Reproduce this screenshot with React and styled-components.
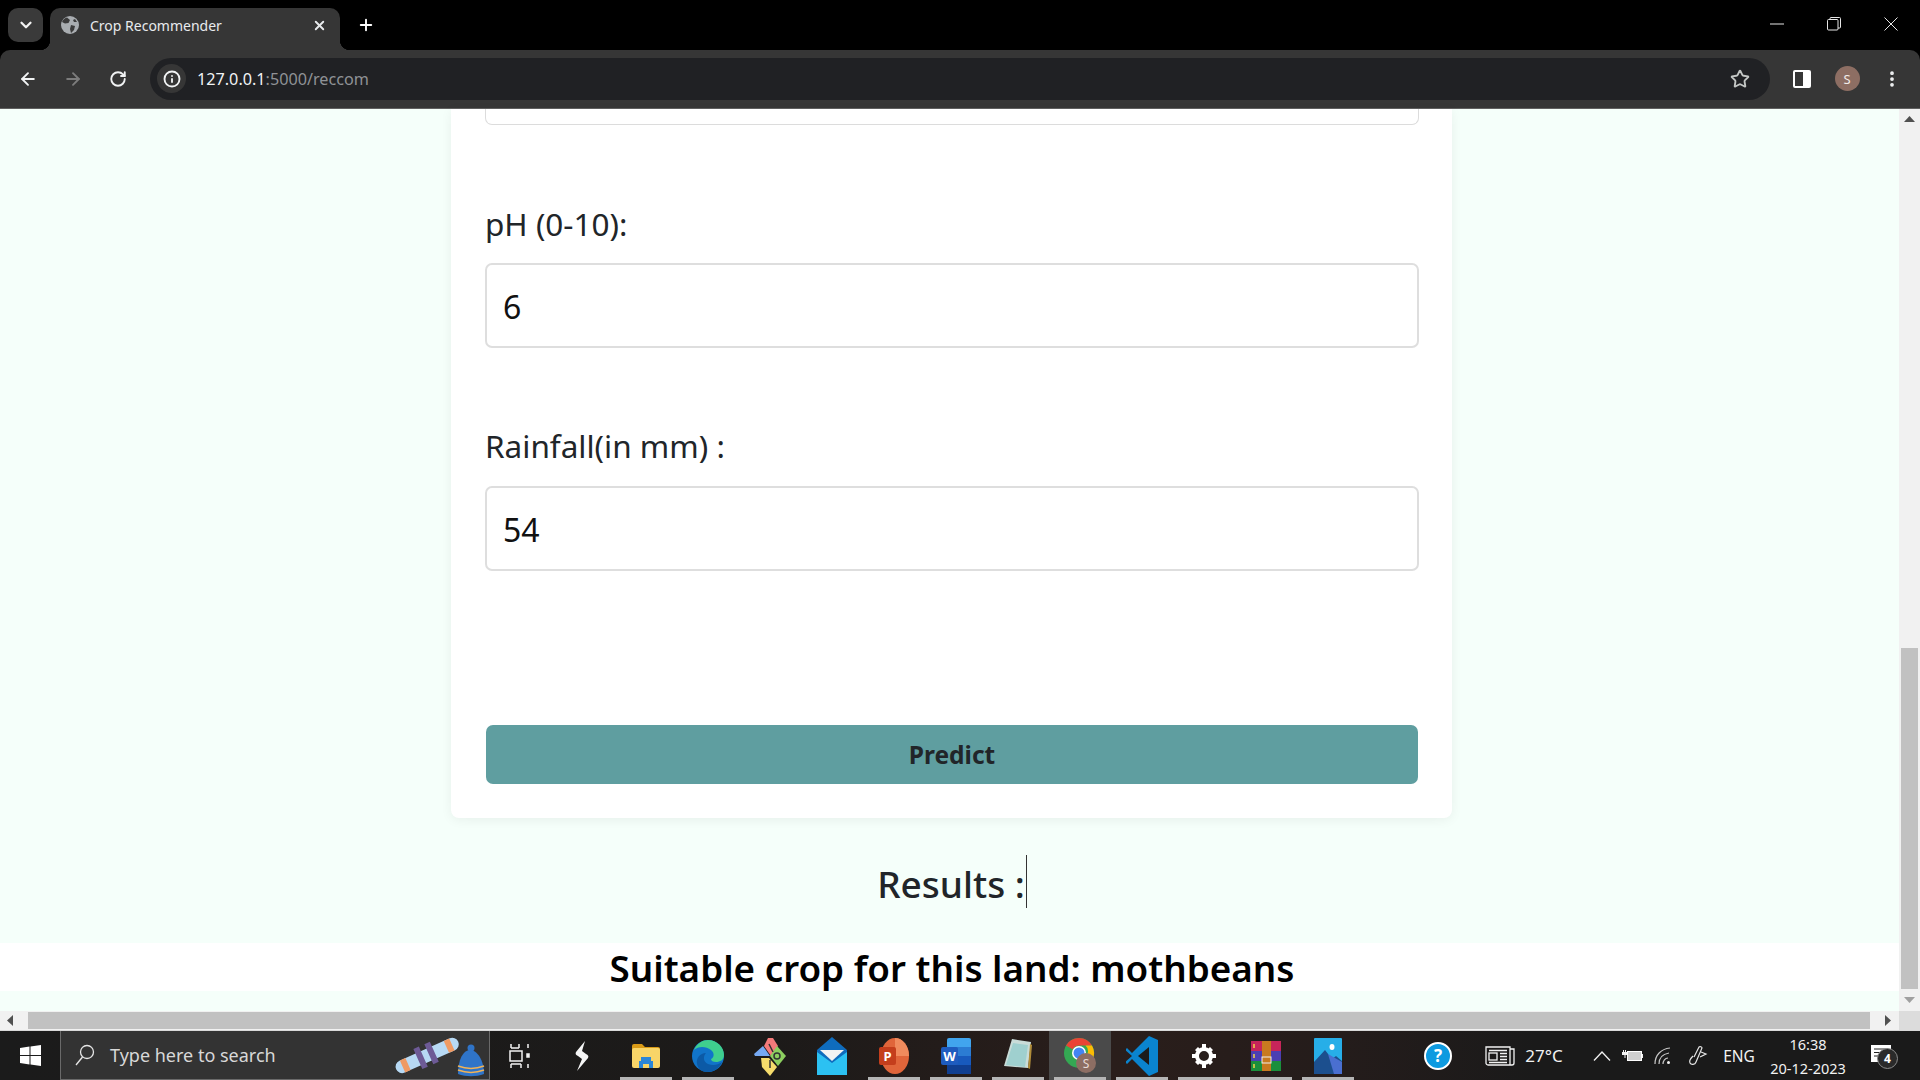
import React from "react";
import styled, { createGlobalStyle } from "styled-components";
import { ArrowLeft, ArrowRight, ChevronDown, Info, MoreVertical, Plus, RotateCw, Star, X } from "lucide-react";

const Global = createGlobalStyle`
  html, body { margin: 0; height: 100%; overflow: hidden; background: #000; }
  #root { height: 100%; }
  * { box-sizing: border-box; }
`;

const Screen = styled.div`
  display: flex;
  flex-direction: column;
  height: 1080px;
  width: 1920px;
  font-family: "Noto Sans", "Open Sans", sans-serif;
`;

/* browser chrome */
const TabStrip = styled.div`
  display: flex;
  align-items: flex-end;
  height: 50px;
  padding-left: 8px;
  background: #000;
  flex: none;
`;
const TabMenu = styled.div`
  width: 35px;
  height: 34px;
  margin-bottom: 8px;
  border-radius: 10px;
  background: #3a3a3a;
  color: #f2f2f2;
  display: flex;
  align-items: center;
  justify-content: center;
`;
const Tab = styled.div`
  position: relative;
  width: 290px;
  height: 42px;
  margin-left: 7px;
  padding: 0 13px 8px 11px;
  background: #363636;
  border-radius: 10px 10px 0 0;
  display: flex;
  align-items: center;
  color: #e8eaed;
  font-size: 14px;
  &::before, &::after {
    content: "";
    position: absolute;
    bottom: 0;
    width: 10px;
    height: 10px;
  }
  &::before { left: -10px; background: radial-gradient(circle at 0 0, #000 10px, #363636 10.5px); }
  &::after { right: -10px; background: radial-gradient(circle at 100% 0, #000 10px, #363636 10.5px); }
`;
const TabTitle = styled.span`
  margin-left: 11px;
  flex: 1;
`;
const NewTab = styled.div`
  width: 30px;
  height: 42px;
  margin-left: 11px;
  padding-bottom: 8px;
  color: #fff;
  display: flex;
  align-items: center;
  justify-content: center;
`;
const WindowControls = styled.div`
  margin-left: auto;
  height: 50px;
  display: flex;
`;
const WindowButton = styled.div`
  width: ${(p) => p.$w || 57}px;
  padding-bottom: 2px;
  display: flex;
  align-items: center;
  justify-content: center;
  color: #e6e6e6;
`;
const Toolbar = styled.div`
  height: 59px;
  flex: none;
  display: flex;
  align-items: center;
  padding: 0 5.5px 1px 5px;
  background: #363636;
  border-radius: 10px 10px 0 0;
  border-bottom: 1px solid #606060;
`;
const NavButton = styled.div`
  width: 45px;
  height: 42px;
  flex: none;
  display: flex;
  align-items: center;
  justify-content: center;
  color: ${(p) => (p.$off ? "#7c7c7c" : "#f1f3f4")};
`;
const Omnibox = styled.div`
  flex: 1;
  height: 42px;
  margin: 0 10px;
  padding: 0 20px 0 7px;
  border-radius: 21px;
  background: #202124;
  display: flex;
  align-items: center;
`;
const SiteBadge = styled.div`
  width: 29px;
  height: 29px;
  border-radius: 50%;
  background: #363636;
  color: #f1f3f4;
  display: flex;
  align-items: center;
  justify-content: center;
`;
const Url = styled.div`
  margin-left: 11px;
  flex: 1;
  font-size: 16.2px;
  color: #8f9296;
  b { font-weight: 400; color: #f1f3f4; }
`;
const Avatar = styled.div`
  width: 25px;
  height: 25px;
  border-radius: 50%;
  background: #8d6e63;
  color: #f3ece9;
  font-size: 13px;
  display: flex;
  align-items: center;
  justify-content: center;
`;

/* page */
const Viewport = styled.div`
  height: 902px;
  flex: none;
  display: flex;
  background: #f5fffa;
`;
const Page = styled.main`
  flex: 1;
  min-width: 0;
  display: flex;
  flex-direction: column;
  align-items: center;
  color: #212529;
`;
const Card = styled.form`
  width: 1001px;
  margin-left: 4px;
  padding: 0 33px 34px 34px;
  background: #fff;
  border-radius: 0 0 8px 8px;
  box-shadow: 0 2px 12px rgba(0, 0, 0, 0.06);
`;
const InputStub = styled.div`
  height: 16px;
  border: 1px solid #dcdcdc;
  border-top: 0;
  border-radius: 0 0 7px 7px;
`;
const Label = styled.label`
  display: block;
  margin: ${(p) => p.$top}px 0 ${(p) => p.$bottom}px;
  font-size: 31.5px;
  line-height: 44px;
  color: #212529;
`;
const Input = styled.div`
  height: 85px;
  padding: 1px 16px 0;
  border: 2px solid #dedede;
  border-radius: 7px;
  font-size: 32px;
  color: #111;
  display: flex;
  align-items: center;
`;
const Submit = styled.button`
  display: block;
  width: 932px;
  height: 59px;
  margin: 154px 0 0 1px;
  border: 0;
  border-radius: 7px;
  background: #5f9ea0;
  color: #212529;
  font: 700 24.5px "Noto Sans", sans-serif;
`;
const ResultsTitle = styled.h2`
  margin: 39px 0 33px 5px;
  height: 53px;
  font-size: 37px;
  font-weight: 500;
  line-height: 53px;
  display: flex;
`;
const Caret = styled.span`
  width: 1px;
  height: 53px;
  margin: -2px 0 0 1px;
  background: #333;
`;
const ResultBand = styled.div`
  width: 100%;
  height: 48px;
  padding-left: 5px;
  background: #fff;
  color: #000;
  font-size: 36.8px;
  font-weight: 600;
  line-height: 50px;
  text-align: center;
`;

/* scrollbars */
const VScroll = styled.div`
  width: 21px;
  flex: none;
  background: #f1f1f1;
  padding: 0 2px 0 2px;
  display: flex;
  flex-direction: column;
  align-items: center;
`;
const ArrowBox = styled.div`
  height: ${(p) => p.$h || 20}px;
  width: ${(p) => p.$w || "100%"};
  padding-left: ${(p) => p.$pad || 0}px;
  flex: none;
  display: flex;
  align-items: center;
  justify-content: center;
`;
const VSpacer = styled.div`
  flex: 1;
`;
const VThumb = styled.div`
  width: 17px;
  height: 341px;
  background: #c1c1c1;
`;
const HScroll = styled.div`
  height: 19px;
  flex: none;
  display: flex;
  align-items: center;
  background: #f1f1f1;
`;
const HThumb = styled.div`
  width: 1842px;
  margin-left: 8px;
  height: 17px;
  flex: none;
  background: #c1c1c1;
`;
const ScrollCorner = styled.div`
  width: 21px;
  height: 19px;
  flex: none;
  margin-left: auto;
  background: #dcdcdc;
`;

/* taskbar */
const Taskbar = styled.div`
  height: 50px;
  flex: none;
  display: flex;
  background: linear-gradient(90deg, #1b1b1b 0%, #1c1a19 40%, #2a1e1b 58%, #241c1b 70%, #1a1a1a 80%);
  border-top: 1px solid #d8d8d8;
  color: #f2f2f2;
`;
const StartButton = styled.div`
  width: 60px;
  display: flex;
  align-items: center;
  justify-content: center;
`;
const SearchBox = styled.div`
  width: 430px;
  display: flex;
  align-items: center;
  padding: 0 2px 0 14px;
  background: #333;
  border: 1px solid #6a6a6a;
  border-top: 0;
  color: #d8d8d8;
  font-size: 18px;
`;
const SearchText = styled.span`
  margin-left: 15px;
  flex: 1;
`;
const AppSlot = styled.div`
  position: relative;
  width: ${(p) => p.$w || 62}px;
  flex: none;
  display: flex;
  align-items: center;
  justify-content: center;
  background: ${(p) => (p.$active ? "#4a4a4a" : "transparent")};
  ${(p) =>
    p.$running &&
    `&::after {
      content: "";
      position: absolute;
      left: 5px;
      right: 5px;
      bottom: 0;
      height: 3px;
      background: #b5b5b5;
    }`}
`;
const TraySlot = styled.div`
  width: ${(p) => p.$w}px;
  margin-left: ${(p) => p.$ml || 0}px;
  flex: none;
  display: flex;
  align-items: center;
  justify-content: center;
  font-size: ${(p) => p.$size || 16}px;
  white-space: nowrap;
`;
const Clock = styled.div`
  width: 86px;
  margin-left: 7px;
  flex: none;
  font-size: 14.5px;
  line-height: 24px;
  text-align: center;
  display: flex;
  flex-direction: column;
  justify-content: center;
`;
const Badge = styled.span`
  position: absolute;
  right: -7px;
  bottom: -6px;
  width: 21px;
  height: 21px;
  border-radius: 50%;
  border: 1px solid #8c8c8c;
  background: #2a2a2a;
  color: #fff;
  font-size: 12px;
  font-weight: 700;
  line-height: 19px;
  text-align: center;
`;
const NotifyIcon = styled.div`
  position: relative;
  width: 20px;
  height: 18px;
  margin-bottom: 4px;
`;

/* drawings */
const Globe = () => (
  <svg width="18" height="18" viewBox="0 0 18 18">
    <circle cx="9" cy="9" r="9" fill="#a9adb1" />
    <path d="M6 1.5 9 4 7.5 7 4 7.5 1 6C2 3.5 4 2 6 1.5ZM10 9l4 1-1 4-3 3-1-4ZM14 3l2 3-3 0-1-2Z" fill="#3b3b3b" />
  </svg>
);
const RestoreIcon = () => (
  <svg width="14" height="14" viewBox="0 0 14 14" fill="none" stroke="currentColor">
    <rect x="0.5" y="2.5" width="10.5" height="10.5" rx="1" />
    <path d="M3 2.5V1.5a1 1 0 0 1 1-1h8.5a1 1 0 0 1 1 1v8.5a1 1 0 0 1-1 1H11" />
  </svg>
);
const MinimizeIcon = () => (
  <svg width="14" height="14" viewBox="0 0 14 14" stroke="currentColor"><path d="M0 7h14" /></svg>
);
const CloseIcon = () => (
  <svg width="14" height="14" viewBox="0 0 14 14" stroke="currentColor"><path d="M.5.5l13 13M13.500.5l-13 13" /></svg>
);
const SidePanelIcon = () => (
  <svg width="18" height="18" viewBox="0 0 18 18">
    <rect x="0" y="0" width="18" height="18" rx="2" fill="#fff" />
    <rect x="2" y="2" width="8" height="14" fill="#363636" />
  </svg>
);
const UpTriangle = ({ fill = "#505050", flip }) => (
  <svg width="11" height="6" viewBox="0 0 11 6" style={flip ? { transform: "scaleY(-1)" } : undefined}>
    <path d="M5.500 0 11 6H0Z" fill={fill} />
  </svg>
);
const SideTriangle = ({ flip }) => (
  <svg width="6" height="11" viewBox="0 0 6 11" style={flip ? { transform: "scaleX(-1)" } : undefined}>
    <path d="M0 0 6 5.500 0 11Z" fill="#505050" />
  </svg>
);
const WindowsLogo = () => (
  <svg width="21" height="21" viewBox="0 0 21 21" fill="#fff">
    <path d="M0 3 9.500 1.600V10H0ZM10.500 1.400 21 0V10H10.500ZM0 11H9.500V19.400L0 18ZM10.500 11H21V21L10.500 19.600Z" />
  </svg>
);
const SearchGlass = () => (
  <svg width="20" height="22" viewBox="0 0 20 22" fill="none" stroke="#e6e6e6" strokeWidth="1.300">
    <circle cx="12" cy="8" r="6.500" />
    <path d="M7.500 13 1 21" />
  </svg>
);
const SearchDoodle = () => (
  <svg width="94" height="44" viewBox="0 0 94 44">
    <g transform="rotate(-24 34 22)">
      <rect x="0" y="16" width="68" height="13" rx="6.500" fill="#b7d9f4" />
      <path d="M7 16h6v13H7ZM55 16h6v13H55Z" fill="#ef9a63" />
      <path d="M24 11h6v22h-6ZM36 11h6v22h-6Z" fill="#6d5a96" />
    </g>
    <path d="M65 41c0-14 5-24 12-24s14 10 14 24c-8 3-18 3-26 0Z" fill="#2f74c8" />
    <circle cx="78" cy="15" r="3.500" fill="#2f74c8" />
    <path d="M65 33c8 3 18 3 26 0M65 37c8 3 18 3 26 0" stroke="#f2b356" strokeWidth="1.600" fill="none" />
  </svg>
);
const TaskView = () => (
  <svg width="22" height="26" viewBox="0 0 22 26" fill="none" stroke="#f2f2f2" strokeWidth="1.500">
    <path d="M2 5V1M10 1v4M2 5h8M2 21v4M12 21v4M2 21h10" />
    <rect x="1" y="8" width="12" height="10" />
    <path d="M19 1v4M19 21v4" />
    <rect x="18" y="11" width="2" height="3" fill="#f2f2f2" />
  </svg>
);
const SlashApp = () => (
  <svg width="16" height="30" viewBox="0 0 16 30">
    <path d="M11 0 2 11c-1 2 0 3 2 4l4 3-5 12 11-13c1-2 0-3-2-4L8 10Z" fill="#f5f5f5" />
  </svg>
);
const FolderIcon = () => (
  <svg width="28" height="24" viewBox="0 0 28 24">
    <path d="M0 2a2 2 0 0 1 2-2h8l3 3h13a2 2 0 0 1 2 2v3H0Z" fill="#d99a16" />
    <rect x="0" y="4" width="28" height="20" rx="2" fill="#f8d568" />
    <path d="M9 13h10v4h2v7h-4v-4h-6v4H7v-7h2Z" fill="#2a86d8" />
  </svg>
);
const EdgeIcon = () => (
  <svg width="32" height="32" viewBox="0 0 32 32">
    <circle cx="16" cy="16" r="16" fill="#1174c9" />
    <path d="M2 10C5 3 11 0 16 0c9 0 16 7 16 15 0 5-4 7-8 7-3 0-5-1-5-3 3-1 4-6 0-9C14 6 6 6 2 10Z" fill="#3fce8e" />
    <path d="M30 22c-3 7-9 10-15 10-5 0-9-3-10-8-1-6 3-11 9-11-3 3-3 9 2 11 5 2 10 1 14-2Z" fill="#0c5aa6" />
  </svg>
);
const DiamondApp = () => (
  <svg width="32" height="40" viewBox="0 0 32 40">
    <path d="M14 2h5l5 8-7 10-7-10Z" fill="#f47a7a" />
    <path d="M9 11l7 10H1l-1-2Z" fill="#76a9f2" transform="translate(0 -1)" />
    <path d="M23 10l9 10-8 10-8-10Z" fill="#8ccf5f" />
    <path d="M15 22l8 9-7 9-8-9-1-9Z" fill="#f6dc6c" />
    <circle cx="23" cy="20" r="3" fill="none" stroke="#333" strokeWidth="1.500" />
    <path d="M15 8l4 8M16 24v8" stroke="#333" strokeWidth="1.500" />
  </svg>
);
const MailIcon = () => (
  <svg width="30" height="38" viewBox="0 0 30 38">
    <path d="M0 13 15 0l15 13v25H0Z" fill="#0f6cbd" />
    <path d="M3 13h24L15 24Z" fill="#f3f3f3" />
    <path d="M0 15l15 11 15-11v23H0Z" fill="#2cc1f2" />
  </svg>
);
const PowerPointIcon = () => (
  <svg width="30" height="36" viewBox="0 0 30 36">
    <ellipse cx="16" cy="18" rx="14" ry="18" fill="#e0653a" />
    <path d="M16 0a14 18 0 0 1 14 18H16Z" fill="#f08b5d" />
    <rect x="0" y="9" width="17" height="18" rx="2" fill="#c43e1c" />
    <text x="8.500" y="23" textAnchor="middle" fontSize="13" fontWeight="700" fill="#fff" fontFamily="Noto Sans">P</text>
  </svg>
);
const WordIcon = () => (
  <svg width="30" height="36" viewBox="0 0 30 36">
    <rect x="6" y="0" width="24" height="36" rx="2" fill="#41a5ee" />
    <rect x="6" y="9" width="24" height="9" fill="#2b7cd3" />
    <rect x="6" y="18" width="24" height="9" fill="#185abd" />
    <rect x="6" y="27" width="24" height="9" fill="#103f91" />
    <rect x="0" y="9" width="17" height="18" rx="2" fill="#1e5cbf" />
    <text x="8.500" y="23" textAnchor="middle" fontSize="13" fontWeight="700" fill="#fff" fontFamily="Noto Sans">W</text>
  </svg>
);
const NotepadIcon = () => (
  <svg width="28" height="36" viewBox="0 0 28 36">
    <path d="M8 1 27 4 24 30 0 28Z" fill="#c9dcd8" />
    <path d="M9 5 24 7 21 29 2 27Z" fill="#9fd0cf" />
    <path d="M24 30l2-24 2 1-2 24Z" fill="#b08d3a" />
  </svg>
);
const ChromeIcon = () => (
  <svg width="32" height="36" viewBox="0 0 32 36">
    <circle cx="15" cy="15" r="15" fill="#34a853" />
    <path d="M15 0a15 15 0 0 1 13 7.500H15a7.500 7.500 0 0 0-6.500 3.800L2 7.500A15 15 0 0 1 15 0Z" fill="#ea4335" />
    <path d="M28 7.500A15 15 0 0 1 15 30l6.500-11.200a7.500 7.500 0 0 0 0-11.300Z" fill="#fbbc04" />
    <circle cx="15" cy="15" r="7" fill="#fff" />
    <circle cx="15" cy="15" r="5.500" fill="#4285f4" />
    <circle cx="22" cy="25" r="10" fill="#8d6e63" />
    <text x="22" y="29.500" textAnchor="middle" fontSize="12" fill="#e8dcd8" fontFamily="Noto Sans">S</text>
  </svg>
);
const VsCodeIcon = () => (
  <svg width="32" height="40" viewBox="0 0 32 40">
    <path d="M23 0 32 4V36L23 40 6 23 1 28-1 26 6 20-1 14 1 12 6 17Z" fill="#0a84cf" />
    <path d="M23 11 12 20l11 9Z" fill="#1b1b1b" />
  </svg>
);
const GearIcon = () => (
  <svg width="24" height="24" viewBox="0 0 24 24">
    <circle cx="12" cy="12" r="7" fill="none" stroke="#fff" strokeWidth="4" />
    <path d="M10 0h4v5h-4ZM10 19h4v5h-4ZM0 10h5v4H0ZM19 10h5v4h-5ZM3 6l3-3 3 3-3 3ZM15 18l3-3 3 3-3 3ZM18 3l3 3-3 3-3-3ZM6 15l3 3-3 3-3-3Z" fill="#fff" />
  </svg>
);
const RarIcon = () => (
  <svg width="30" height="30" viewBox="0 0 30 30">
    <rect width="30" height="10" fill="#c7255a" />
    <rect y="10" width="30" height="10" fill="#4b3fb2" />
    <rect y="20" width="30" height="10" fill="#1b8f3c" />
    <rect x="11" width="9" height="30" fill="#c87a20" />
    <rect x="11" y="16" width="9" height="6" fill="none" stroke="#eee" />
    <path d="M3 3v4M3 13v4M3 23v4" stroke="#f3d34a" strokeWidth="1.500" />
  </svg>
);
const PhotosIcon = () => (
  <svg width="28" height="36" viewBox="0 0 28 36">
    <rect width="28" height="36" rx="1" fill="#27aee8" />
    <path d="M0 24 11 12l7 9 4-3 6 5v13H0Z" fill="#1c4f8e" />
    <path d="M14 16l14 8v12H20Z" fill="#4a6fd0" />
    <ellipse cx="18" cy="9" rx="2.500" ry="3" fill="#fff" />
  </svg>
);
const HelpIcon = () => (
  <svg width="28" height="28" viewBox="0 0 28 28">
    <circle cx="14" cy="14" r="13" fill="#0d9ae0" stroke="#fff" strokeWidth="2" />
    <text x="14" y="20" textAnchor="middle" fontSize="17" fontWeight="700" fill="#fff" fontFamily="Noto Sans">?</text>
  </svg>
);
const NewsIcon = () => (
  <svg width="30" height="20" viewBox="0 0 30 20" fill="none" stroke="#f2f2f2" strokeWidth="1.300">
    <path d="M1 1h24v18H3a2 2 0 0 1-2-2ZM25 3h4v14a2 2 0 0 1-2 2h-2" />
    <rect x="4" y="7" width="8" height="7" />
    <path d="M4 4.500h18M15 7.500h7M15 10.500h7M15 13.500h7M4 16.500h18" />
  </svg>
);
const TrayChevron = () => (
  <svg width="18" height="10" viewBox="0 0 18 10" fill="none" stroke="#f2f2f2" strokeWidth="1.300"><path d="M1 9.500 9 1l8 8.500" /></svg>
);
const BatteryIcon = () => (
  <svg width="21" height="13" viewBox="0 0 21 13">
    <path d="M0 3h1V1h1v2h1V1h1v2h1v3H3.500v3h-1V6H0Z" fill="#f2f2f2" />
    <rect x="5.500" y="2.500" width="14" height="9" fill="#cfcfcf" stroke="#fff" />
    <rect x="20" y="5" width="1" height="4" fill="#f2f2f2" />
  </svg>
);
const WifiIcon = () => (
  <svg width="18" height="18" viewBox="0 0 18 18" fill="none" stroke="#c8c8c8" strokeWidth="1.200">
    <path d="M1 17C1 8 7 2 16 1M5 17C5 11 9 7 15 6M9 17c0-3 2-6 5-6" />
    <circle cx="14.500" cy="15.500" r="1.500" fill="#f2f2f2" stroke="none" />
  </svg>
);
const PenIcon = () => (
  <svg width="22" height="22" viewBox="0 0 22 22" fill="none" stroke="#e6e6e6" strokeWidth="1.200">
    <path d="M8 12 13 2c1-1 3 0 3 1l-6 14c-1 3-5 3-6 1-1-2 1-5 3-7M15 7l5 2-6 3" />
  </svg>
);

const apps = [
  { icon: <FolderIcon />, running: true },
  { icon: <EdgeIcon />, running: true },
  { icon: <DiamondApp /> },
  { icon: <MailIcon /> },
  { icon: <PowerPointIcon />, running: true },
  { icon: <WordIcon />, running: true },
  { icon: <NotepadIcon />, running: true },
  { icon: <ChromeIcon />, running: true, active: true },
  { icon: <VsCodeIcon />, running: true },
  { icon: <GearIcon />, running: true },
  { icon: <RarIcon />, running: true },
  { icon: <PhotosIcon />, running: true },
];

function NotifyLines() {
  return (
    <svg width="20" height="17" viewBox="0 0 20 17">
      <rect width="20" height="17" fill="#fff" />
      <path d="M3 4h14M3 7.500h14M3 11h9" stroke="#222" strokeWidth="1" />
    </svg>
  );
}

export default function App() {
  return (
    <Screen>
      <Global />
      <TabStrip>
        <TabMenu><ChevronDown size={18} strokeWidth={3} /></TabMenu>
        <Tab>
          <Globe />
          <TabTitle>Crop Recommender</TabTitle>
          <X size={15} strokeWidth={3} />
        </Tab>
        <NewTab><Plus size={18} strokeWidth={2.5} /></NewTab>
        <WindowControls>
          <WindowButton><MinimizeIcon /></WindowButton>
          <WindowButton><RestoreIcon /></WindowButton>
          <WindowButton $w={58}><CloseIcon /></WindowButton>
        </WindowControls>
      </TabStrip>
      <Toolbar>
        <NavButton><ArrowLeft size={20} strokeWidth={2.25} /></NavButton>
        <NavButton $off><ArrowRight size={20} strokeWidth={2.25} /></NavButton>
        <NavButton><RotateCw size={18} strokeWidth={2.5} /></NavButton>
        <Omnibox>
          <SiteBadge><Info size={18} strokeWidth={2.5} /></SiteBadge>
          <Url><b>127.0.0.1</b>:5000/reccom</Url>
          <Star size={20} strokeWidth={2.25} color="#c4c7c5" />
        </Omnibox>
        <NavButton><SidePanelIcon /></NavButton>
        <NavButton><Avatar>S</Avatar></NavButton>
        <NavButton><MoreVertical size={20} strokeWidth={2.5} /></NavButton>
      </Toolbar>

      <Viewport>
        <Page>
          <Card onSubmit={(e) => e.preventDefault()}>
            <InputStub />
            <Label $top={77} $bottom={17}>pH (0-10):</Label>
            <Input>6</Input>
            <Label $top={76} $bottom={18}>Rainfall(in mm) :</Label>
            <Input>54</Input>
            <Submit type="submit">Predict</Submit>
          </Card>
          <ResultsTitle>Results :<Caret /></ResultsTitle>
          <ResultBand>Suitable crop for this land: mothbeans</ResultBand>
        </Page>
        <VScroll>
          <ArrowBox $h={20}><UpTriangle /></ArrowBox>
          <VSpacer />
          <VThumb />
          <ArrowBox $h={22}><UpTriangle fill="#a0a0a0" flip /></ArrowBox>
        </VScroll>
      </Viewport>

      <HScroll>
        <ArrowBox $h={19} $w="20px"><SideTriangle flip /></ArrowBox>
        <HThumb />
        <ArrowBox $h={19} $w="29px" $pad={7}><SideTriangle /></ArrowBox>
        <ScrollCorner />
      </HScroll>

      <Taskbar>
        <StartButton><WindowsLogo /></StartButton>
        <SearchBox>
          <SearchGlass />
          <SearchText>Type here to search</SearchText>
          <SearchDoodle />
        </SearchBox>
        <AppSlot $w={59}><TaskView /></AppSlot>
        <AppSlot $w={66}><SlashApp /></AppSlot>
        {apps.map((app, i) => (
          <AppSlot key={i} $running={app.running} $active={app.active}>{app.icon}</AppSlot>
        ))}
        <TraySlot $w={40} $ml={59}><HelpIcon /></TraySlot>
        <TraySlot $w={44} $ml={20}><NewsIcon /></TraySlot>
        <TraySlot $w={40} $ml={2} $size={17}>27°C</TraySlot>
        <TraySlot $w={24} $ml={26}><TrayChevron /></TraySlot>
        <TraySlot $w={28} $ml={4}><BatteryIcon /></TraySlot>
        <TraySlot $w={30} $ml={2}><WifiIcon /></TraySlot>
        <TraySlot $w={30} $ml={4}><PenIcon /></TraySlot>
        <TraySlot $w={38} $ml={8} $size={15.5}>ENG</TraySlot>
        <Clock><span>16:38</span><span>20-12-2023</span></Clock>
        <TraySlot $w={44} $ml={8}>
          <NotifyIcon><NotifyLines /><Badge>4</Badge></NotifyIcon>
        </TraySlot>
      </Taskbar>
    </Screen>
  );
}
